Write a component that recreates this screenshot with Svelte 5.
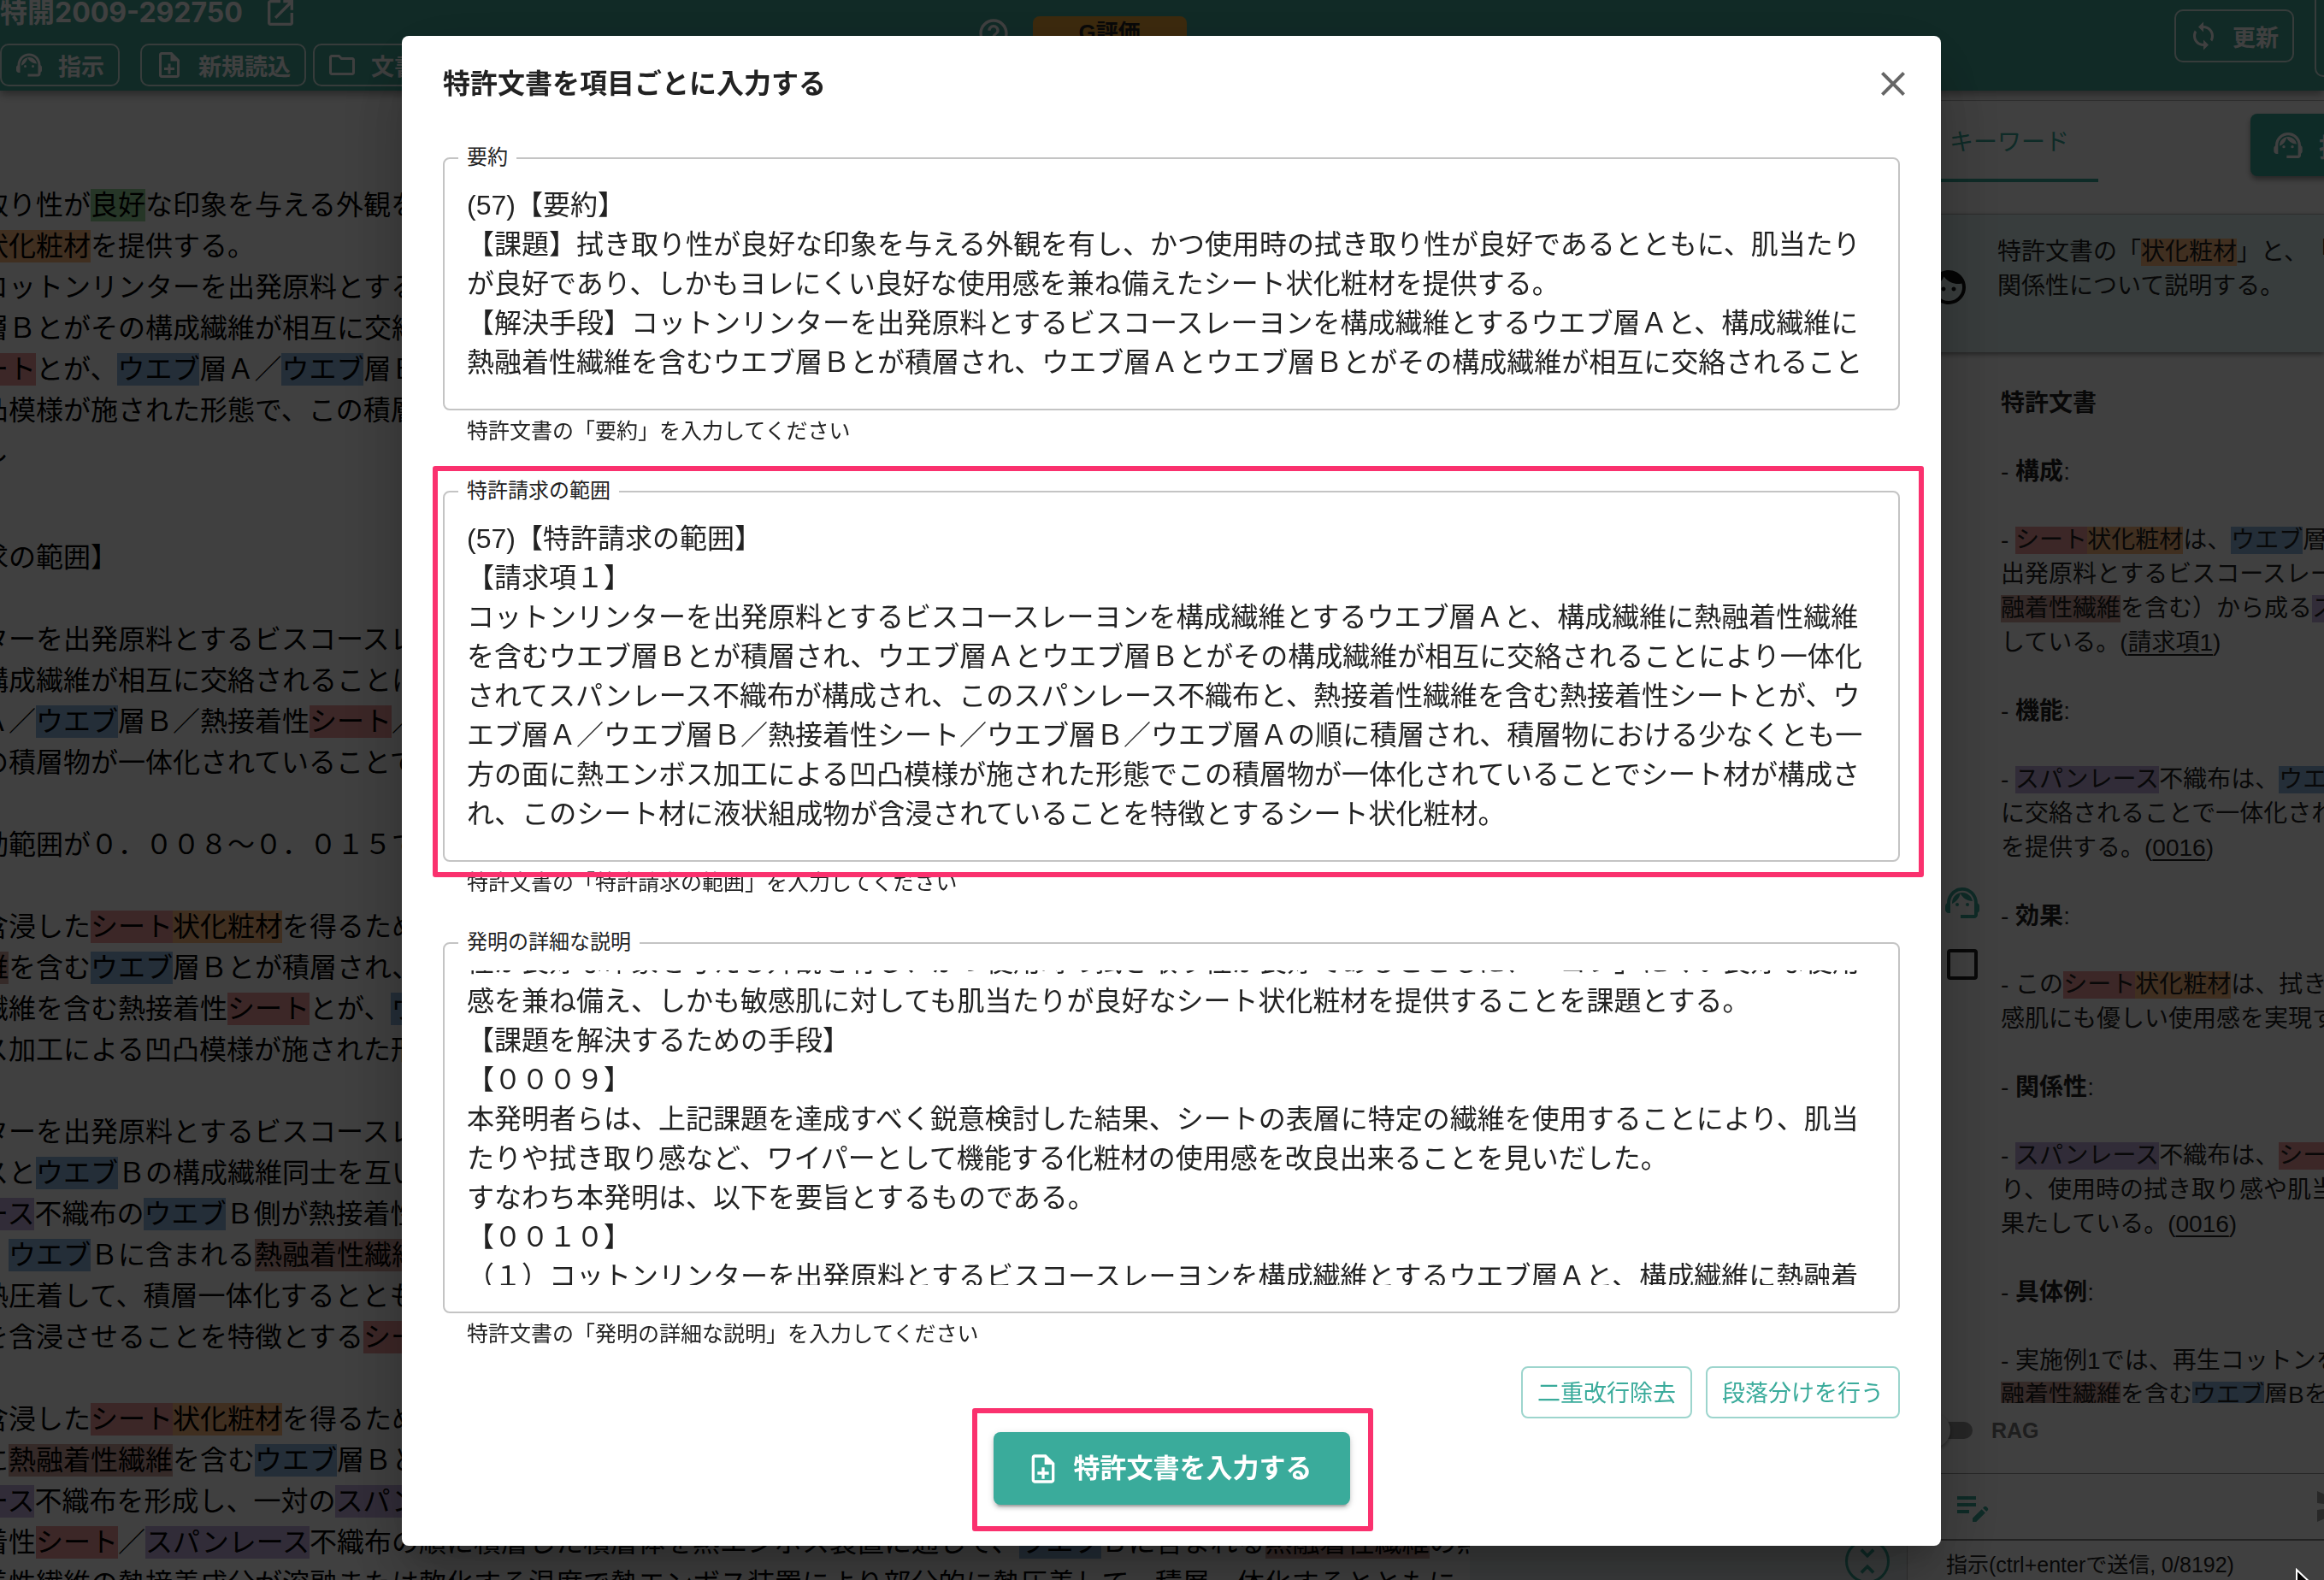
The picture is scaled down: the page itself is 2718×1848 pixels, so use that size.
<script lang="ts">
	import { onMount } from 'svelte';

	type Part = { text: string; tone?: string };

	type Field = {
		id: string;
		label: string;
		rows: number;
		value: string;
		framed?: boolean;
	};

	// {r:シート} marks a keyword, the letter picks its colour
	function parts(line: string): Part[] {
		return line
			.split(/(\{[a-z]:[^}]*\})/)
			.filter(Boolean)
			.map((s) => (s.startsWith('{') ? { tone: s[1], text: s.slice(3, -1) } : { text: s }));
	}

	const sections: string[][] = [
		[
			'取り性が{g:良好}な印象を与える外観を有し、かつ',
			'{o:状化粧材}を提供する。',
			'コットンリンターを出発原料とするビスコース',
			'層Ｂとがその構成繊維が相互に交絡される',
			'{r:ート}とが、{b:ウエブ}層Ａ／{b:ウエブ}層Ｂ／熱接着性',
			'凸模様が施された形態で、この積層物が一体化',
			'し'
		],
		[
			'求の範囲】',
			'',
			'ターを出発原料とするビスコースレーヨンを',
			'構成繊維が相互に交絡されることにより一体化',
			'Ａ／{b:ウエブ}層Ｂ／熱接着性{r:シート}／ウエブ層',
			'の積層物が一体化されていることでシート材',
			'',
			'動範囲が０．００８～０．０１５である',
			'',
			'含浸した{r:シート}{o:状化粧材}を得るための製造方法',
			'{n:維}を含む{b:ウエブ}層Ｂとが積層され、ウエブ層',
			'繊維を含む熱接着性{r:シート}とが、{b:ウエブ}層Ａ',
			'ス加工による凹凸模様が施された形態でこの',
			'',
			'ターを出発原料とするビスコースレーヨンを',
			'スと{b:ウエブ}Ｂの構成繊維同士を互いに交絡',
			'{p:ース}不織布の{b:ウエブ}Ｂ側が熱接着性シート',
			'、{b:ウエブ}Ｂに含まれる{n:熱融着性繊維}の熱接着',
			'熱圧着して、積層一体化するとともに',
			'を含浸させることを特徴とする{r:シート}状化粧材',
			'',
			'含浸した{r:シート}{o:状化粧材}を得るための製造方法',
			'に{n:熱融着性繊維}を含む{b:ウエブ}層Ｂとが積層',
			'{p:ース}不織布を形成し、一対の{p:スパンレース}不織布',
			'着性{r:シート}／{p:スパンレース}不織布の順に積層した積層体を熱エンボス装置に通して、{b:ウエブ}Ｂに含まれる{n:熱融着性繊維}の熱',
			'着性繊維の熱接着成分が溶融または軟化する温度で熱エンボス装置により部分的に熱圧着して、積層一体化するとともに'
		]
	];

	const fields: Field[] = [
		{
			id: 'abstract',
			label: '要約',
			rows: 5,
			value:
				'(57)【要約】\n【課題】拭き取り性が良好な印象を与える外観を有し、かつ使用時の拭き取り性が良好であるとともに、肌当たりが良好であり、しかもヨレにくい良好な使用感を兼ね備えたシート状化粧材を提供する。\n【解決手段】コットンリンターを出発原料とするビスコースレーヨンを構成繊維とするウエブ層Ａと、構成繊維に熱融着性繊維を含むウエブ層Ｂとが積層され、ウエブ層Ａとウエブ層Ｂとがその構成繊維が相互に交絡されること'
		},
		{
			id: 'claims',
			label: '特許請求の範囲',
			rows: 8,
			framed: true,
			value:
				'(57)【特許請求の範囲】\n【請求項１】\nコットンリンターを出発原料とするビスコースレーヨンを構成繊維とするウエブ層Ａと、構成繊維に熱融着性繊維を含むウエブ層Ｂとが積層され、ウエブ層Ａとウエブ層Ｂとがその構成繊維が相互に交絡されることにより一体化されてスパンレース不織布が構成され、このスパンレース不織布と、熱接着性繊維を含む熱接着性シートとが、ウエブ層Ａ／ウエブ層Ｂ／熱接着性シート／ウエブ層Ｂ／ウエブ層Ａの順に積層され、積層物における少なくとも一方の面に熱エンボス加工による凹凸模様が施された形態でこの積層物が一体化されていることでシート材が構成され、このシート材に液状組成物が含浸されていることを特徴とするシート状化粧材。'
		},
		{
			id: 'description',
			label: '発明の詳細な説明',
			rows: 8,
			value:
				'性が良好な印象を与える外観を有し、かつ使用時の拭き取り性が良好であるとともに、「ヨレ」にくい良好な使用感を兼ね備え、しかも敏感肌に対しても肌当たりが良好なシート状化粧材を提供することを課題とする。\n【課題を解決するための手段】\n【０００９】\n本発明者らは、上記課題を達成すべく鋭意検討した結果、シートの表層に特定の繊維を使用することにより、肌当たりや拭き取り感など、ワイパーとして機能する化粧材の使用感を改良出来ることを見いだした。\nすなわち本発明は、以下を要旨とするものである。\n【００１０】\n（１）コットンリンターを出発原料とするビスコースレーヨンを構成繊維とするウエブ層Ａと、構成繊維に熱融着'
		}
	];

	onMount(() => {
		const description = document.getElementById('description');
		if (description) description.scrollTop = 33;
	});
</script>

{#snippet rich(line: string)}{#each parts(line) as part}{#if part.tone}<mark class="tone-{part.tone}">{part.text}</mark>{:else}{part.text}{/if}{/each}{/snippet}

{#snippet agentIcon()}
	<path d="M21 12.22C21 6.73 16.74 3 12 3c-4.69 0-9 3.65-9 9.28-.6.34-1 .98-1 1.72v2c0 1.1.9 2 2 2h1v-6.1c0-3.87 3.13-7 7-7s7 3.13 7 7V19h-8v2h8c1.1 0 2-.9 2-2v-1.22c.59-.31 1-.92 1-1.64v-2.3c0-.7-.41-1.31-1-1.62z" />
	<circle cx="9" cy="13" r="1" />
	<circle cx="15" cy="13" r="1" />
	<path d="M18 11.03C17.52 8.18 15.04 6 12.05 6c-3.03 0-6.29 2.51-6.03 6.45 2.47-1.01 4.33-3.21 4.86-5.89 1.31 2.63 4 4.44 7.12 4.47z" />
{/snippet}

{#snippet noteAddIcon()}
	<path d="M13 11h-2v3H8v2h3v3h2v-3h3v-2h-3zm1-9H6c-1.1 0-2 .9-2 2v16c0 1.1.89 2 1.99 2H18c1.1 0 2-.9 2-2V8l-6-6zm4 18H6V4h7v5h5v11z" />
{/snippet}

<div class="app">
	<header class="topbar">
		<div class="topbar-left">
			<div class="doc-title">
				<span>特開2009-292750</span>
				<svg class="icon-40" viewBox="0 0 24 24"><path d="M19 19H5V5h7V3H5c-1.11 0-2 .9-2 2v14c0 1.1.89 2 2 2h14c1.1 0 2-.9 2-2v-7h-2v7zM14 3v2h3.59l-9.83 9.83 1.41 1.41L19 6.41V10h2V3h-7z" /></svg>
			</div>
			<div class="toolbar">
				<button class="bar-button spaced">
					<svg class="icon-36" viewBox="0 0 24 24">{@render agentIcon()}</svg>指示
				</button>
				<button class="bar-button">
					<svg class="icon-36" viewBox="0 0 24 24">{@render noteAddIcon()}</svg>新規読込
				</button>
				<button class="bar-button">
					<svg class="icon-36" viewBox="0 0 24 24"><path d="m9.17 6 2 2H20v10H4V6h5.17M10 4H4c-1.1 0-1.99.9-1.99 2L2 18c0 1.1.9 2 2 2h16c1.1 0 2-.9 2-2V8c0-1.1-.9-2-2-2h-8l-2-2z" /></svg>文書一覧
				</button>
			</div>
		</div>
		<div class="topbar-mid">
			<svg class="icon-40" viewBox="0 0 24 24"><path d="M11 18h2v-2h-2v2zm1-16C6.48 2 2 6.48 2 12s4.48 10 10 10 10-4.48 10-10S17.52 2 12 2zm0 18c-4.41 0-8-3.59-8-8s3.59-8 8-8 8 3.59 8 8-3.59 8-8 8zm0-14c-2.21 0-4 1.79-4 4h2c0-1.1.9-2 2-2s2 .9 2 2c0 2-3 1.75-3 5h2c0-2.25 3-2.5 3-5 0-2.21-1.79-4-4-4z" /></svg>
			<button class="rate">G評価</button>
		</div>
		<div class="topbar-right">
			<button class="bar-button tall">
				<svg class="icon-36" viewBox="0 0 24 24"><path d="M12 4V1L8 5l4 4V6c3.31 0 6 2.69 6 6 0 1.01-.25 1.97-.7 2.8l1.46 1.46C19.54 15.03 20 13.57 20 12c0-4.42-3.58-8-8-8zm0 14c-3.31 0-6-2.69-6-6 0-1.01.25-1.97.7-2.8L5.24 7.74C4.46 8.97 4 10.43 4 12c0 4.42 3.58 8 8 8v3l4-4-4-4v3z" /></svg>更新
			</button>
			<button class="bar-button more" aria-label="メニュー"></button>
		</div>
	</header>

	<main class="workspace">
		<article class="document">
			{#each sections as section}
				<section>
					{#each section as line}
						<p class="doc-line">{@render rich(line)}</p>
					{/each}
				</section>
			{/each}
		</article>

		<div class="middle">
			<button class="fold" aria-label="折りたたむ">
				<svg viewBox="0 0 24 24"><path d="M7.41 18.59 8.83 20 12 16.83 15.17 20l1.41-1.41L12 14l-4.59 4.59zm9.18-13.18L15.17 4 12 7.17 8.83 4 7.41 5.41 12 10l4.59-4.59z" /></svg>
			</button>
		</div>

		<aside class="chat">
			<div class="tabs">
				<button class="tab">キーワード</button>
				<button class="ask">
					<svg class="icon-40" viewBox="0 0 24 24">{@render agentIcon()}</svg>指示
				</button>
			</div>

			<div class="question">
				<div class="avatar">
					<svg class="icon-48" viewBox="0 0 24 24"><path d="M9 11.75c-.69 0-1.25.56-1.25 1.25s.56 1.25 1.25 1.25 1.25-.56 1.25-1.25-.56-1.25-1.25-1.25zm6 0c-.69 0-1.25.56-1.25 1.25s.56 1.25 1.25 1.25 1.25-.56 1.25-1.25-.56-1.25-1.25-1.25zM12 2C6.48 2 2 6.48 2 12s4.48 10 10 10 10-4.48 10-10S17.52 2 12 2zm0 18c-4.41 0-8-3.59-8-8 0-.29.02-.58.05-.86 2.36-1.05 4.23-2.98 5.21-5.37C11.07 8.33 14.05 10 17.42 10c.78 0 1.53-.09 2.25-.26.21.71.33 1.47.33 2.26 0 4.41-3.59 8-8 8z" /></svg>
				</div>
				<div class="question-text">
					<p>{@render rich('特許文書の「{o:状化粧材}」と、「{p:スパンレース}')}</p>
					<p>関係性について説明する。</p>
				</div>
			</div>

			<div class="answer">
				<div class="answer-side">
					<svg class="icon-48 green" viewBox="0 0 24 24">{@render agentIcon()}</svg>
					<input class="pick" type="checkbox" aria-label="選択" />
				</div>
				<div class="answer-text">
					<p><strong>特許文書</strong></p>
					<p>- <strong>構成</strong>:</p>
					<div>
						<p>- {@render rich('{r:シート}{o:状化粧材}は、{b:ウエブ}層Ａ')}</p>
						<p>出発原料とするビスコースレーヨン</p>
						<p>{@render rich('{n:融着性繊維}を含む）から成る{p:スパンレース}')}</p>
						<p>している。(<a href="#claim-1">請求項1</a>)</p>
					</div>
					<p>- <strong>機能</strong>:</p>
					<div>
						<p>- {@render rich('{p:スパンレース}不織布は、{b:ウエブ}')}</p>
						<p>に交絡されることで一体化され</p>
						<p>を提供する。(<a href="#p0016">0016</a>)</p>
					</div>
					<p>- <strong>効果</strong>:</p>
					<div>
						<p>- {@render rich('この{r:シート}{o:状化粧材}は、拭き取り')}</p>
						<p>感肌にも優しい使用感を実現する</p>
					</div>
					<p>- <strong>関係性</strong>:</p>
					<div>
						<p>- {@render rich('{p:スパンレース}不織布は、{r:シート}')}</p>
						<p>り、使用時の拭き取り感や肌当たり</p>
						<p>果たしている。(<a href="#p0016">0016</a>)</p>
					</div>
					<p>- <strong>具体例</strong>:</p>
					<div>
						<p>- 実施例1では、再生コットンを</p>
						<p>{@render rich('{n:融着性繊維}を含む{b:ウエブ}層Bを')}</p>
					</div>
				</div>
			</div>

			<label class="rag">
				<input type="checkbox" role="switch" />
				RAG
			</label>
			<div class="compose">
				<svg class="icon-48 green" viewBox="0 0 24 24"><path d="M3 10h11v2H3v-2zm0-2h11V6H3v2zm0 8h7v-2H3v2zm15.01-3.13.71-.71c.39-.39 1.02-.39 1.41 0l.71.71c.39.39.39 1.02 0 1.41l-.71.71-2.12-2.12zm-.71.71-5.3 5.3V21h2.12l5.3-5.3-2.12-2.12z" /></svg>
				<svg class="icon-48 muted" viewBox="0 0 24 24"><path d="M2.01 21 23 12 2.01 3 2 10l15 2-15 2z" /></svg>
			</div>
			<p class="hint">指示(ctrl+enterで送信, 0/8192)</p>
		</aside>
	</main>

	<div class="backdrop">
		<div class="dialog" role="dialog" aria-modal="true" aria-labelledby="dialog-title">
			<div class="dialog-head">
				<h2 id="dialog-title">特許文書を項目ごとに入力する</h2>
				<button class="close" aria-label="閉じる">
					<svg class="icon-48" viewBox="0 0 24 24"><path d="M19 6.41 17.59 5 12 10.59 6.41 5 5 6.41 10.59 12 5 17.59 6.41 19 12 13.41 17.59 19 19 17.59 13.41 12z" /></svg>
				</button>
			</div>

			{#each fields as field}
				<div class="field">
					<div class="outline">
						<label for={field.id}>{field.label}</label>
						<textarea id={field.id} rows={field.rows} value={field.value} spellcheck="false"></textarea>
						{#if field.framed}<span class="frame frame-field"></span>{/if}
					</div>
					<p class="helper">特許文書の「{field.label}」を入力してください</p>
				</div>
			{/each}

			<div class="tools">
				<button>二重改行除去</button>
				<button>段落分けを行う</button>
			</div>

			<div class="actions">
				<button class="submit">
					<svg class="icon-40" viewBox="0 0 24 24">{@render noteAddIcon()}</svg>
					<span class="submit-text">特許文書を入力する</span>
					<span class="frame frame-submit"></span>
				</button>
			</div>
		</div>
	</div>

	<svg class="pointer" viewBox="0 0 24 36"><path d="M2 2v27l6-6 4 10 5-2-4-10h9z" /></svg>
</div>

<style>
	:global(body) {
		background: #fff;
	}

	.app {
		position: relative;
		height: 100vh;
		display: flex;
		flex-direction: column;
		overflow: hidden;
		color: #000;
		font-family: 'Liberation Sans', 'Noto Sans CJK JP', sans-serif;
		font-size: 28px;
		text-spacing-trim: space-all;
	}

	p,
	h2 {
		margin: 0;
	}

	button {
		font-family: inherit;
		cursor: pointer;
	}

	svg {
		flex: none;
		fill: currentColor;
	}

	.icon-36 {
		width: 36px;
		height: 36px;
	}

	.icon-40 {
		width: 40px;
		height: 40px;
	}

	.icon-48 {
		width: 48px;
		height: 48px;
	}

	.green {
		color: #3aab9b;
	}

	.muted {
		color: #9e9e9e;
	}

	mark {
		display: inline-block;
		color: inherit;
		line-height: 38px;
	}

	.tone-r {
		background: #ef9a9a;
	}

	.tone-o {
		background: #ffbb80;
	}

	.tone-b {
		background: #90b8e0;
	}

	.tone-g {
		background: #98d89c;
	}

	.tone-p {
		background: #c4b0e0;
	}

	.tone-n {
		background: #d4a6a0;
	}

	/* top bar */
	.topbar {
		position: relative;
		flex: none;
		display: grid;
		grid-template-columns: 42% auto 1fr;
		grid-template-rows: 106px;
		background: #45a899;
		color: #fff;
		z-index: 1;
		box-shadow: 0 4px 10px rgba(0, 0, 0, 0.4);
		clip-path: inset(0 0 -20px 0);
	}

	.topbar-left {
		display: flex;
		flex-direction: column;
		justify-content: flex-end;
		gap: 16px;
		padding-bottom: 5px;
	}

	.doc-title {
		display: flex;
		align-items: center;
		gap: 24px;
		height: 40px;
		font-family: Inter, 'Noto Sans CJK JP', sans-serif;
		font-size: 32px;
		line-height: 40px;
		font-weight: 700;
	}

	.toolbar {
		display: flex;
		gap: 8px;
	}

	.bar-button {
		display: flex;
		align-items: center;
		gap: 16px;
		height: 50px;
		padding: 0 16px 0 14px;
		border: 2px solid rgba(255, 255, 255, 0.8);
		border-radius: 10px;
		background: none;
		color: #fff;
		font-size: 27px;
		font-weight: 700;
		white-space: nowrap;
	}

	.spaced {
		margin-right: 16px;
	}

	.topbar-mid {
		display: flex;
		align-items: flex-start;
		gap: 26px;
		padding-top: 19px;
	}

	.rate {
		width: 180px;
		height: 50px;
		padding: 0 0 12px;
		border: 0;
		border-radius: 8px;
		background: #f0a838;
		color: #222;
		font-size: 26px;
		font-weight: 700;
		line-height: 32px;
	}

	.topbar-right {
		display: flex;
		justify-content: flex-end;
		gap: 24px;
		margin-right: -60px;
	}

	.tall {
		height: 62px;
		margin-top: 11px;
	}

	.more {
		width: 71px;
		height: 106px;
		margin-top: -16px;
	}

	/* work area behind the dialog */
	.workspace {
		flex: 1;
		min-height: 0;
		display: grid;
		grid-template-columns: minmax(0, 1fr) 511px 488px;
	}

	.document {
		display: flex;
		flex-direction: column;
		gap: 76px;
		padding-top: 110px;
		overflow: hidden;
		font-size: 32px;
	}

	.doc-line {
		height: 48px;
		margin-left: -22px;
		line-height: 48px;
		white-space: nowrap;
	}

	.middle {
		display: flex;
		flex-direction: column;
		align-items: flex-end;
		justify-content: flex-end;
		padding-right: 20px;
		background: #ecf2f4;
	}

	.fold {
		display: flex;
		align-items: center;
		justify-content: center;
		width: 52px;
		height: 52px;
		margin-bottom: -4px;
		padding: 0;
		border: 3px solid #3aab9b;
		border-radius: 50%;
		background: none;
		color: #3aab9b;
	}

	.fold svg {
		width: 44px;
		height: 44px;
	}

	.chat {
		display: flex;
		flex-direction: column;
		min-height: 0;
		margin-top: 11px;
		border-left: 1px solid #bbb;
		border-top: 1px solid #bbb;
		overflow: hidden;
		color: #222;
	}

	.chat p {
		line-height: 40px;
		white-space: nowrap;
	}

	.chat mark {
		line-height: 32px;
	}

	.tabs {
		flex: none;
		display: flex;
		justify-content: space-between;
		align-items: flex-start;
		height: 132px;
		padding-left: 15px;
		border-bottom: 1px solid #ccc;
	}

	.tab {
		height: 95px;
		padding: 0 34px;
		border: 0;
		border-bottom: 4px solid #3aab9b;
		background: none;
		color: #3aab9b;
		font-size: 28px;
	}

	.ask {
		display: flex;
		align-items: center;
		gap: 16px;
		height: 73px;
		margin: 15px -78px 0 0;
		padding: 0 24px;
		border: 0;
		border-radius: 8px;
		background: #3aab9b;
		color: #fff;
		font-size: 30px;
		font-weight: 700;
		white-space: nowrap;
		box-shadow: 0 4px 6px rgba(0, 0, 0, 0.4);
	}

	.question {
		position: relative;
		flex: none;
		display: flex;
		height: 161px;
		background: #e0f2f1;
		box-shadow: 0 2px 6px rgba(0, 0, 0, 0.5);
	}

	.avatar {
		display: flex;
		align-items: center;
		padding: 8px 33px 0 24px;
		color: #111;
	}

	.question-text {
		padding-top: 24px;
	}

	.answer {
		flex: 1;
		min-height: 0;
		display: flex;
		overflow: hidden;
	}

	.answer-side {
		display: flex;
		flex-direction: column;
		align-items: center;
		justify-content: center;
		gap: 30px;
		padding: 124px 21px 0 40px;
	}

	.pick {
		appearance: none;
		width: 36px;
		height: 36px;
		margin: 0;
		border: 4px solid #222;
		border-radius: 4px;
	}

	.answer-text {
		display: flex;
		flex-direction: column;
		gap: 40px;
		padding-top: 40px;
	}

	.answer-text a {
		color: inherit;
		text-underline-offset: 4px;
	}

	.rag {
		flex: none;
		display: flex;
		align-items: center;
		gap: 22px;
		height: 82px;
		padding: 0 0 18px 8px;
		box-sizing: border-box;
		color: #777;
		font-size: 25px;
		font-weight: 700;
	}

	.rag input {
		appearance: none;
		position: relative;
		width: 68px;
		height: 20px;
		margin: 0;
		border-radius: 10px;
		background: #999;
	}

	.rag input::before {
		content: '';
		position: absolute;
		left: 2px;
		top: -10px;
		width: 40px;
		height: 40px;
		border-radius: 50%;
		background: #fafafa;
		box-shadow: 0 2px 4px rgba(0, 0, 0, 0.4);
	}

	.compose {
		flex: none;
		display: flex;
		align-items: center;
		justify-content: space-between;
		height: 76px;
		margin-right: -36px;
		padding-left: 52px;
		border-top: 1px solid #999;
		border-bottom: 2px solid #888;
	}

	.hint {
		flex: none;
		height: 46px;
		padding: 8px 0 0 45px;
		box-sizing: border-box;
		font-size: 25px;
	}

	/* dialog */
	.backdrop {
		position: fixed;
		inset: 0;
		z-index: 2;
		display: flex;
		align-items: flex-start;
		justify-content: center;
		padding: 42px 0 40px 22px;
		background: rgba(0, 0, 0, 0.75);
	}

	.dialog {
		width: 100%;
		max-width: 1800px;
		padding: 32px 48px 48px;
		box-sizing: border-box;
		border-radius: 8px;
		background: #fff;
		color: #222;
		box-shadow:
			0 22px 30px -14px rgba(0, 0, 0, 0.2),
			0 48px 76px 6px rgba(0, 0, 0, 0.14),
			0 18px 92px 16px rgba(0, 0, 0, 0.12);
	}

	.dialog-head {
		display: flex;
		align-items: center;
		justify-content: space-between;
		height: 48px;
		margin-bottom: 62px;
	}

	.dialog-head h2 {
		font-size: 32px;
		line-height: 48px;
		font-weight: 700;
	}

	.close {
		display: flex;
		margin-right: -16px;
		padding: 0;
		border: 0;
		background: none;
		color: #666;
	}

	.field {
		margin-bottom: 48px;
	}

	.outline {
		position: relative;
		padding: 31px 26px;
		border: 2px solid #c4c4c4;
		border-radius: 8px;
	}

	.outline label {
		position: absolute;
		top: -20px;
		left: 16px;
		padding: 0 10px;
		background: #fff;
		font-size: 24px;
		line-height: 36px;
	}

	textarea {
		display: block;
		width: 100%;
		padding: 0;
		border: 0;
		outline: 0;
		resize: none;
		overflow-y: auto;
		scrollbar-width: none;
		background: none;
		color: inherit;
		font-family: inherit;
		font-size: 32px;
		line-height: 46px;
	}

	.helper {
		height: 40px;
		padding: 6px 28px 0;
		font-size: 25px;
		line-height: 36px;
	}

	.frame {
		position: absolute;
		border: 6px solid #fa316e;
		border-radius: 3px;
		pointer-events: none;
	}

	.frame-field {
		inset: -31px -30px -20px -14px;
	}

	.frame-submit {
		inset: -28px -27px -31px -25px;
	}

	.tools {
		display: flex;
		justify-content: flex-end;
		gap: 16px;
		margin: -32px 0 16px;
	}

	.tools button {
		height: 61px;
		padding: 0 17px 3px;
		border: 2px solid #9dd5cd;
		border-radius: 8px;
		background: none;
		color: #3aab9b;
		font-size: 27px;
	}

	.actions {
		display: flex;
		justify-content: center;
	}

	.submit {
		position: relative;
		display: flex;
		align-items: center;
		gap: 16px;
		height: 85px;
		padding: 0 44px 0 38px;
		border: 0;
		border-radius: 8px;
		background: #3aab9b;
		color: #fff;
		font-size: 31px;
		font-weight: 700;
		box-shadow:
			0 6px 2px -4px rgba(0, 0, 0, 0.2),
			0 4px 4px rgba(0, 0, 0, 0.14),
			0 2px 10px rgba(0, 0, 0, 0.12);
	}

	.submit-text {
		padding-bottom: 6px;
	}

	.pointer {
		position: absolute;
		right: 10px;
		bottom: -22px;
		z-index: 3;
		width: 24px;
		height: 36px;
		fill: #000;
		stroke: #fff;
		stroke-width: 2;
	}
</style>
